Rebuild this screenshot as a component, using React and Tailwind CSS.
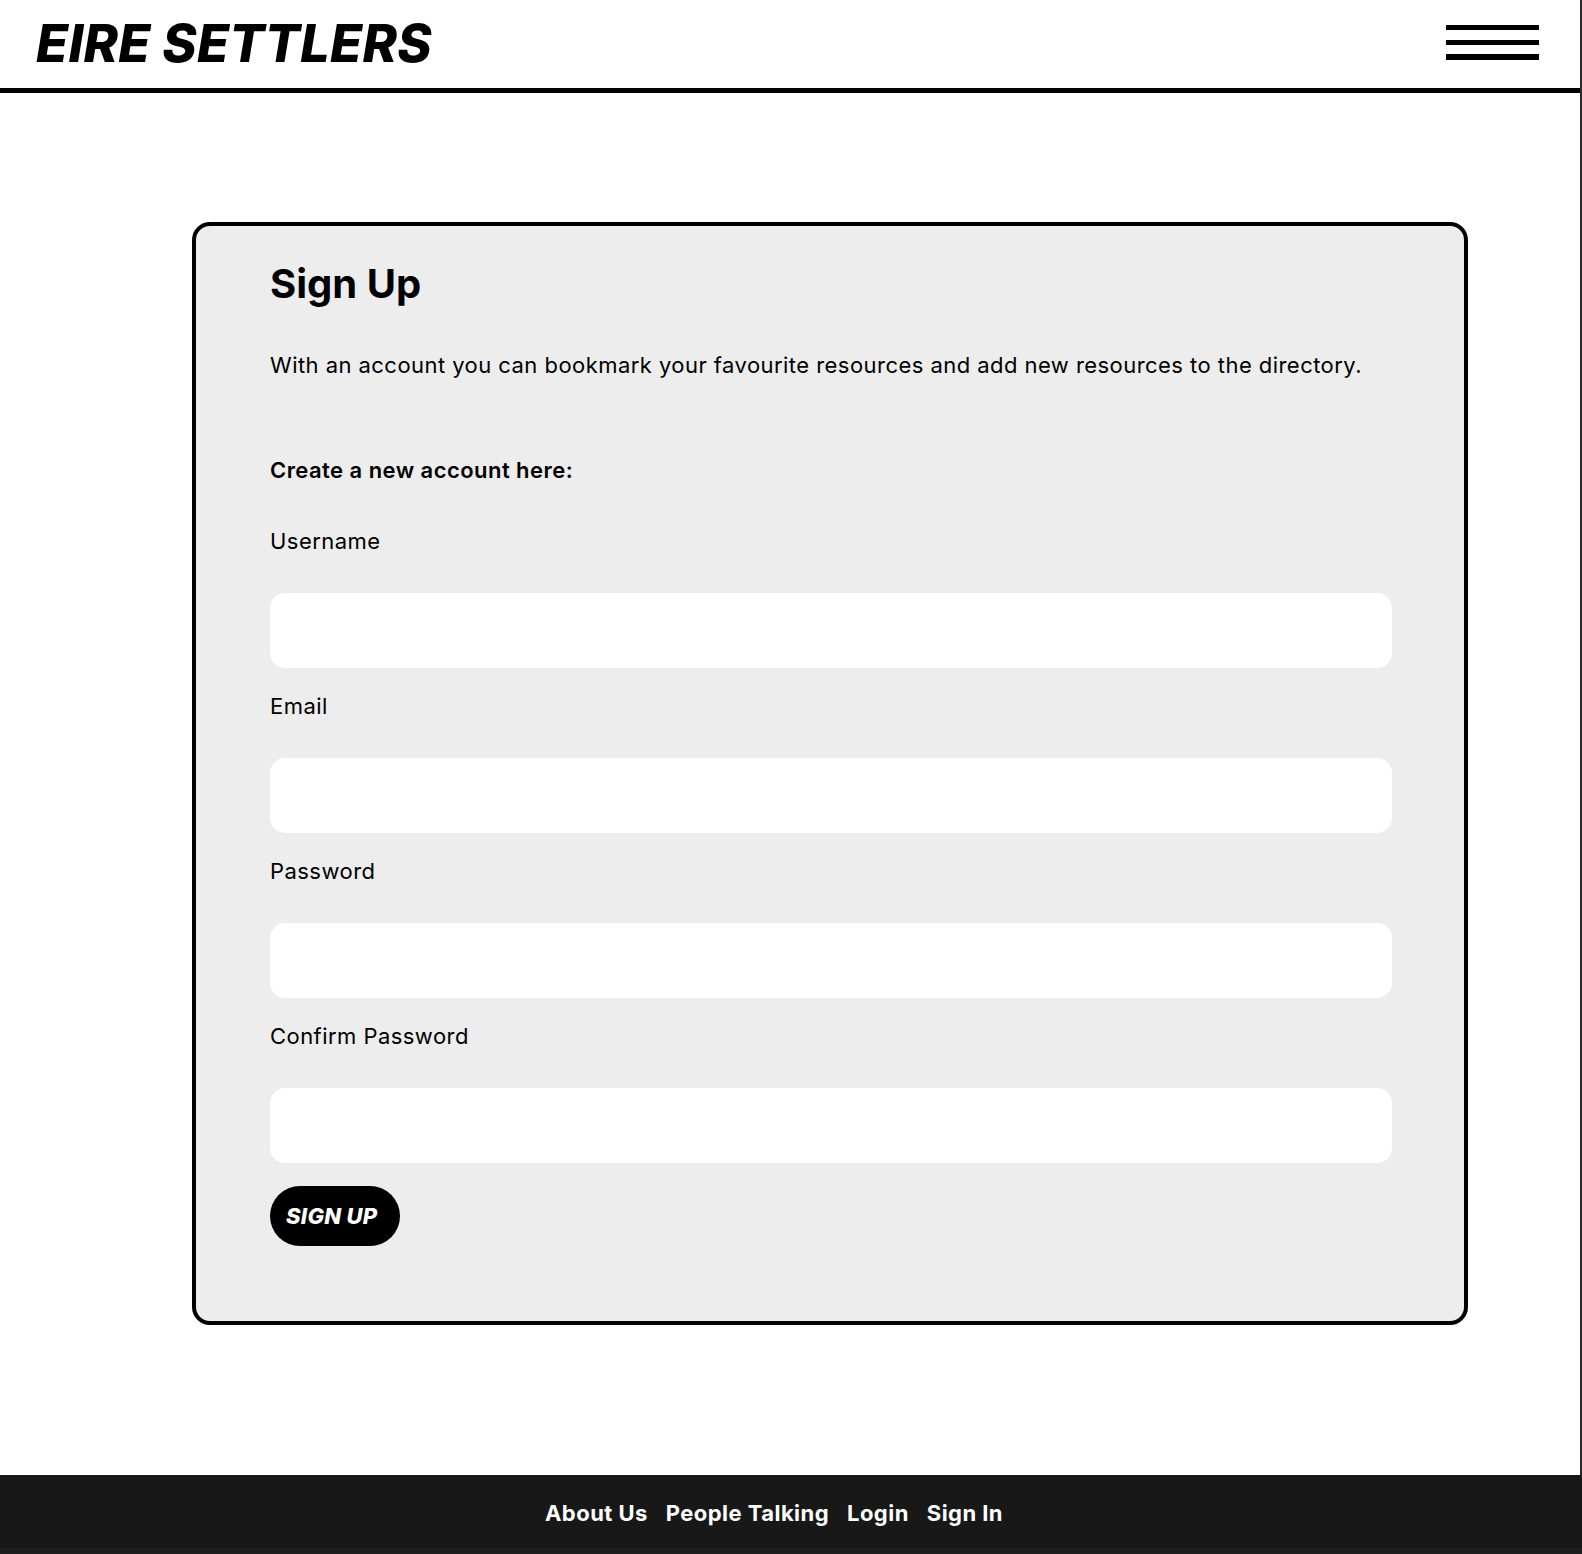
import React from 'react';

const fields = [
  { id: 'username', label: 'Username', type: 'text' },
  { id: 'email', label: 'Email', type: 'email' },
  { id: 'password', label: 'Password', type: 'password' },
  { id: 'confirm', label: 'Confirm Password', type: 'password' },
];

const footerLinks = ['About Us', 'People Talking', 'Login', 'Sign In'];

const App = () => {
  return (
    <div className="min-h-screen bg-white text-black font-['Inter','Noto_Sans',sans-serif]">
      <div className="border-r-2 border-[#2a2a2a]">
        {/* Header */}
        <header className="h-[93px] border-b-[5px] border-black flex items-start justify-between">
          <h1 className="ml-[36px] mt-[14px] text-[52px] leading-[60px] font-extrabold italic tracking-[0.3px]">
            EIRE SETTLERS
          </h1>
          <button type="button" className="mr-[41px] mt-[25px]" aria-label="Menu">
            <svg width="93" height="35" viewBox="0 0 93 35">
              <rect x="0" y="0" width="93" height="5" fill="#000" />
              <rect x="0" y="15" width="93" height="5" fill="#000" />
              <rect x="0" y="29" width="93" height="6" fill="#000" />
            </svg>
          </button>
        </header>

        {/* Sign up card */}
        <main className="pt-[129px] pb-[150px]">
          <section className="ml-[192px] w-[1276px] rounded-[18px] border-4 border-black bg-[#ededed] pl-[74px] pt-[34px] pb-[75px]">
            <h2 className="text-[40px] leading-[48px] font-bold">Sign Up</h2>
            <p className="mt-[41px] text-[22px] leading-[32px] tracking-[0.45px]">
              With an account you can bookmark your favourite resources and add new resources to the directory.
            </p>
            <p className="mt-[73px] text-[22px] leading-[32px] font-semibold tracking-[0.45px]">Create a new account here:</p>

            <form className="mt-[39px] flex flex-col" onSubmit={(e) => e.preventDefault()}>
              {fields.map((field, index) => (
                <div key={field.id} className={index === 0 ? '' : 'mt-[22px]'}>
                  <label htmlFor={field.id} className="block text-[22px] leading-[32px] tracking-[0.45px]">
                    {field.label}
                  </label>
                  <input
                    id={field.id}
                    type={field.type}
                    className="mt-[36px] block h-[75px] w-[1122px] rounded-[15px] bg-white px-5 text-[22px] outline-none"
                  />
                </div>
              ))}
              <button
                type="submit"
                className="mt-[23px] h-[60px] w-[130px] rounded-full bg-black pl-4 text-left text-[22px] font-extrabold italic tracking-[0.3px] text-white"
              >
                SIGN UP
              </button>
            </form>
          </section>
        </main>
      </div>

      {/* Footer */}
      <footer className="bg-[#181818]">
        <div className="h-[73px] flex justify-center gap-[18px] pt-[24px] pr-[34px] text-[22px] leading-[28px] font-bold tracking-[0.45px] text-white">
          {footerLinks.map((link) => (
            <a key={link} href="#">{link}</a>
          ))}
        </div>
        <div className="h-[6px] bg-[#1e1e1e]"></div>
      </footer>
    </div>
  );
};

export default App;
